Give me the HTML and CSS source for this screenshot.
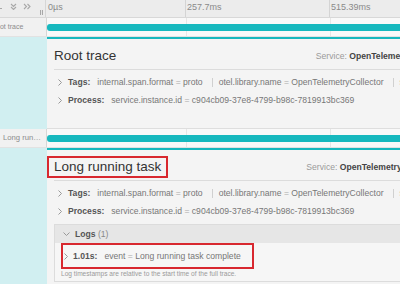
FILE: index.html
```html
<!DOCTYPE html>
<html lang="en">

<head>
  <meta charset="UTF-8" />
  <title>Trace detail</title>
  <link rel="stylesheet" href="styles.css">
</head>

<body>
  <div class="trace">

    <div class="ticks-row">
      <div class="name-cell tools">
        <svg class="ico-cut" width="3" height="8" viewBox="0 0 3 8"><path d="M0 3.5h2" /></svg>
        <svg class="ico-down" width="7" height="7" viewBox="0 0 7 7"><path d="M1 1l2.5 2.5L6 1M1 4l2.5 2.5L6 4" /></svg>
        <svg class="ico-right" width="8" height="7" viewBox="0 0 8 7"><path d="M1 1l2.5 2.5L1 6M4.5 1L7 3.5 4.5 6" /></svg>
        <svg class="ico-grip" width="3" height="5" viewBox="0 0 3 5"><path d="M0.5 0v5M2.5 0v5" /></svg>
      </div>
      <div class="ticks">
        <div class="tick first">0µs</div>
        <div class="tick">257.7ms</div>
        <div class="tick">515.39ms</div>
      </div>
    </div>

    <!-- root span -->
    <div class="span-row">
      <div class="name-cell"><span class="span-name root">Root trace</span></div>
      <div class="bar-cell"><div class="bar"></div></div>
    </div>
    <div class="detail-row">
      <div class="indent"></div>
      <div class="detail">
        <div class="detail-head">
          <h2 class="detail-title">Root trace</h2>
          <div class="overview">
            <span class="ov-item">Service: <strong>OpenTelemetryCollector</strong></span>
            <span class="ov-item">Duration: <strong>773.09ms</strong></span>
            <span class="ov-item">Start Time: <strong>0μs</strong></span>
          </div>
        </div>
        <div class="kv-row first">
          <svg class="chev" width="4" height="7" viewBox="0 0 4 7"><path d="M0.5 0.5l3 3-3 3" /></svg>
          <span class="kv-label">Tags:</span>
          <span class="kv">internal.span.format <i>=</i> proto</span>
          <span class="kv">otel.library.name <i>=</i> OpenTelemetryCollector</span>
          <span class="kv">span.kind <i>=</i> internal</span>
        </div>
        <div class="kv-row">
          <svg class="chev" width="4" height="7" viewBox="0 0 4 7"><path d="M0.5 0.5l3 3-3 3" /></svg>
          <span class="kv-label">Process:</span>
          <span class="kv">service.instance.id <i>=</i> c904cb09-37e8-4799-b98c-7819913bc369</span>
        </div>
      </div>
    </div>

    <!-- child span -->
    <div class="span-row">
      <div class="name-cell"><span class="span-name">Long running task</span></div>
      <div class="bar-cell"><div class="bar"></div></div>
    </div>
    <div class="detail-row">
      <div class="indent"></div>
      <div class="detail">
        <div class="detail-head">
          <h2 class="detail-title marked">Long running task</h2>
          <div class="overview">
            <span class="ov-item">Service: <strong>OpenTelemetryCollector</strong></span>
            <span class="ov-item">Duration: <strong>773.09ms</strong></span>
            <span class="ov-item">Start Time: <strong>0.2ms</strong></span>
          </div>
        </div>
        <div class="kv-row first">
          <svg class="chev" width="4" height="7" viewBox="0 0 4 7"><path d="M0.5 0.5l3 3-3 3" /></svg>
          <span class="kv-label">Tags:</span>
          <span class="kv">internal.span.format <i>=</i> proto</span>
          <span class="kv">otel.library.name <i>=</i> OpenTelemetryCollector</span>
          <span class="kv">span.kind <i>=</i> internal</span>
        </div>
        <div class="kv-row">
          <svg class="chev" width="4" height="7" viewBox="0 0 4 7"><path d="M0.5 0.5l3 3-3 3" /></svg>
          <span class="kv-label">Process:</span>
          <span class="kv">service.instance.id <i>=</i> c904cb09-37e8-4799-b98c-7819913bc369</span>
        </div>

        <div class="logs">
          <div class="logs-head">
            <svg class="chev-down" width="7" height="4" viewBox="0 0 7 4"><path d="M0.5 0.5l3 3 3-3" /></svg>
            <strong>Logs</strong>&nbsp;<span class="count">(1)</span>
          </div>
          <div class="logs-body">
            <div class="log-item">
              <svg class="chev" width="4" height="7" viewBox="0 0 4 7"><path d="M0.5 0.5l3 3-3 3" /></svg>
              <span class="log-time">1.01s:</span>
              <span class="kv">event <i>=</i> Long running task complete</span>
            </div>
            <div class="log-note">Log timestamps are relative to the start time of the full trace.</div>
          </div>
        </div>
      </div>
    </div>

  </div>
</body>

</html>
```

FILE: styles.css
```css
body {
  margin: 0;
  width: 400px;
  height: 284px;
  overflow: hidden;
  background-color: #f4f4f4;
  font-family: "Liberation Sans", Arial, sans-serif;
  font-size: 8.6px;
  color: #555;
}

.trace {
  width: 400px;
}

/* header with time ticks */
.ticks-row {
  display: flex;
  height: 17px;
  background-color: #ececec;
  border-bottom: 1px solid #d8d8d8;
}

.name-cell {
  flex: 0 0 46px;
  border-right: 1px solid #d6d6d6;
  overflow: hidden;
  white-space: nowrap;
}

.tools {
  display: flex;
  align-items: flex-start;
  padding-top: 3px;
  box-sizing: border-box;
}

.tools svg path {
  fill: none;
  stroke: #a8a8a8;
  stroke-width: 1.1;
}

.ico-cut {
  margin-top: 2px;
}

.ico-down {
  margin-left: 7px;
}

.ico-right {
  margin-left: 6px;
}

.ico-grip {
  margin-left: 9px;
  margin-top: 7px;
}

.ico-grip path {
  stroke: #c4c4c4;
}

.ticks {
  display: flex;
  flex: 1;
  overflow: hidden;
}

.tick {
  flex: 0 0 144px;
  box-sizing: border-box;
  border-left: 1px solid #d4d4d4;
  padding: 2px 0 0 1px;
  font-size: 9px;
  line-height: 11px;
  color: #8a8a8a;
  white-space: nowrap;
}

.tick.first {
  flex-basis: 139px;
  border-left: none;
  padding-left: 2px;
}

/* span rows */
.span-row {
  display: flex;
  height: 18px;
  border-bottom: 1px solid #e2e2e2;
  background-color: #f9f9f9;
}

.span-row .name-cell {
  background-color: #f1f1f1;
}

.span-name {
  display: block;
  padding: 0 4px 0 3px;
  font-size: 7.7px;
  line-height: 18px;
  color: #8c8c8c;
  overflow: hidden;
  text-overflow: ellipsis;
}

.span-name.root {
  margin-left: -12px;
  font-size: 7px;
  overflow: visible;
}

.bar-cell {
  flex: 1;
  background:
    linear-gradient(#e6e6e6, #e6e6e6) 139px 0 / 1px 100% no-repeat,
    linear-gradient(#e6e6e6, #e6e6e6) 283px 0 / 1px 100% no-repeat;
}

.bar {
  height: 7px;
  margin-top: 6px;
  background-color: #17b8be;
  border-radius: 3px 0 0 3px;
}

/* expanded span detail */
.detail-row {
  display: flex;
}

.indent {
  flex: 0 0 47px;
  background-color: #d1eff1;
}

.detail {
  flex: 1;
  min-width: 0;
  overflow: hidden;
  border-top: 2px solid #17b8be;
  border-bottom: 1px solid #dedede;
  padding: 0 0 19px 7px;
  background-color: #f4f4f4;
}

.detail-head {
  display: flex;
  align-items: center;
  width: 560px;
  padding: 9px 0 5px;
  border-bottom: 1px solid #dcdcdc;
}

.detail-title {
  margin: 0;
  font-size: 13.5px;
  line-height: 16px;
  font-weight: normal;
  color: #333;
  white-space: nowrap;
}

.detail-title.marked {
  padding: 1px 5px;
  margin: -1px -5px;
  outline: 2px solid #d8282f;
}

.overview {
  margin-left: auto;
  white-space: nowrap;
  color: #9a9a9a;
}

.overview strong {
  color: #444;
}

.ov-item + .ov-item {
  margin-left: 6px;
  padding-left: 6px;
  border-left: 1px solid #ccc;
}

.kv-row {
  display: flex;
  align-items: center;
  height: 18px;
  white-space: nowrap;
}

.kv-row.first {
  margin-top: 3px;
}

.chev {
  flex: 0 0 4px;
  margin: 0 6px 0 4px;
}

.chev path,
.chev-down path {
  fill: none;
  stroke: #999;
  stroke-width: 1;
}

.kv-label {
  font-weight: bold;
  color: #555;
  margin-right: 7px;
}

.kv {
  display: inline-block;
  line-height: 9px;
  padding-right: 9px;
  color: #777;
}

.kv + .kv {
  padding-left: 6px;
  border-left: 1px solid #d0d0d0;
}

.kv i {
  font-style: normal;
  color: #aaa;
}

/* logs accordion */
.logs {
  width: 560px;
  margin-top: 4px;
  border: 1px solid #dcdcdc;
  background-color: #f6f6f6;
}

.logs-head {
  display: flex;
  align-items: center;
  height: 18px;
  padding-left: 8px;
  background-color: #e6e6e6;
  color: #555;
}

.chev-down {
  margin-right: 5px;
}

.count {
  color: #888;
}

.logs-body {
  padding: 2px 0 3px 8px;
}

.log-item {
  display: flex;
  align-items: center;
  width: 189px;
  height: 22px;
  outline: 2px solid #d8282f;
  white-space: nowrap;
}

.log-item .chev {
  margin: 0 5px 0 1px;
}

.log-time {
  font-weight: bold;
  color: #555;
  margin-right: 7px;
}

.log-note {
  margin: 3px 0 0 -2px;
  font-size: 6.6px;
  line-height: 8px;
  color: #9a9a9a;
}
```
